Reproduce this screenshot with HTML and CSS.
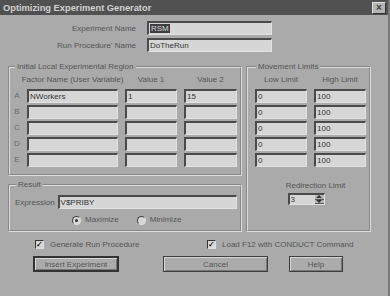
FILE: index.html
```html
<!DOCTYPE html>
<html lang="en">
<head>
    <meta charset="UTF-8">
    <title>Optimizing Experiment Generator</title>
    <link rel="stylesheet" href="styles.css">
</head>
<body>
    <div class="dialog">
        <div class="titlebar">
            <span class="title">Optimizing Experiment Generator</span>
            <span class="close">&times;</span>
        </div>

        <div class="names">
            <div class="name-row">
                <label>Experiment Name</label>
                <div class="field wide"><span class="selected">RSM</span></div>
            </div>
            <div class="name-row">
                <label>Run Procedure' Name</label>
                <div class="field wide">DoTheRun</div>
            </div>
        </div>

        <div class="middle">
            <div class="left-col">
                <fieldset class="group region">
                    <legend>Initial Local Experimental Region</legend>
                    <div class="region-grid">
                        <span></span>
                        <span class="head">Factor Name (User Variable)</span>
                        <span class="head">Value 1</span>
                        <span class="head">Value 2</span>

                        <span class="letter">A</span>
                        <div class="field">NWorkers</div>
                        <div class="field">1</div>
                        <div class="field">15</div>

                        <span class="letter">B</span>
                        <div class="field"></div>
                        <div class="field"></div>
                        <div class="field"></div>

                        <span class="letter">C</span>
                        <div class="field"></div>
                        <div class="field"></div>
                        <div class="field"></div>

                        <span class="letter">D</span>
                        <div class="field"></div>
                        <div class="field"></div>
                        <div class="field"></div>

                        <span class="letter">E</span>
                        <div class="field"></div>
                        <div class="field"></div>
                        <div class="field"></div>
                    </div>
                </fieldset>

                <fieldset class="group result">
                    <legend>Result</legend>
                    <div class="expr-row">
                        <label>Expression</label>
                        <div class="field expr">V$PRIBY</div>
                    </div>
                    <div class="radio-row">
                        <span class="option"><span class="radio on"></span>Maximize</span>
                        <span class="option"><span class="radio"></span>Minimize</span>
                    </div>
                </fieldset>
            </div>

            <fieldset class="group limits">
                <legend>Movement Limits</legend>
                <div class="limits-grid">
                    <span class="head">Low Limit</span>
                    <span class="head">High Limit</span>
                    <div class="field">0</div>
                    <div class="field">100</div>
                    <div class="field">0</div>
                    <div class="field">100</div>
                    <div class="field">0</div>
                    <div class="field">100</div>
                    <div class="field">0</div>
                    <div class="field">100</div>
                    <div class="field">0</div>
                    <div class="field">100</div>
                </div>
                <div class="redirection">
                    <span class="head">Redirection Limit</span>
                    <div class="spinner">
                        <span class="spin-value">3</span>
                        <span class="spin-buttons">
                            <span class="arrow up"></span>
                            <span class="arrow down"></span>
                        </span>
                    </div>
                </div>
            </fieldset>
        </div>

        <div class="checks">
            <span class="check-item first"><span class="checkbox">&#10003;</span>Generate Run Procedure</span>
            <span class="check-item"><span class="checkbox">&#10003;</span>Load F12 with CONDUCT Command</span>
        </div>

        <div class="buttons">
            <button class="btn insert">Insert Experiment</button>
            <button class="btn cancel">Cancel</button>
            <button class="btn help">Help</button>
        </div>
    </div>
</body>
</html>
```

FILE: styles.css
```css
body {
    margin: 0;
    font-family: "Liberation Sans", Arial, sans-serif;
    font-size: 8px;
    color: #555;
    background-color: #a8a8a8;
}
.dialog {
    width: 390px;
    height: 296px;
    box-sizing: border-box;
    background-color: #aaaaaa;
    border-right: 2px solid #7a7a7a;
    overflow: hidden;
}
.titlebar {
    height: 15px;
    background-color: #515151;
    display: flex;
    align-items: center;
    justify-content: space-between;
    padding: 0 2px 0 3px;
}
.title {
    color: #d2d2d2;
    font-weight: bold;
    font-size: 9.3px;
}
.close {
    width: 12px;
    height: 10px;
    background-color: #b4b4b4;
    border-top: 1px solid #e0e0e0;
    border-left: 1px solid #e0e0e0;
    border-bottom: 1px solid #333;
    border-right: 1px solid #333;
    color: #444;
    font-size: 10px;
    line-height: 10px;
    text-align: center;
    font-weight: bold;
}
.field {
    height: 14px;
    box-sizing: border-box;
    background-color: #d6d6d6;
    border-top: 2px solid #4a4a4a;
    border-left: 2px solid #4a4a4a;
    border-bottom: 1px solid #e2e2e2;
    border-right: 1px solid #e2e2e2;
    padding-left: 1px;
    line-height: 11px;
    color: #333;
    white-space: nowrap;
    overflow: hidden;
}
.selected {
    background-color: #3e3e3e;
    color: #dcdcdc;
    padding: 0 1px;
}
.names {
    padding-top: 6px;
    display: flex;
    flex-direction: column;
    gap: 3px;
}
.name-row {
    display: flex;
    align-items: center;
}
.name-row label {
    width: 136px;
    text-align: right;
    margin-right: 11px;
}
.field.wide {
    width: 125px;
}
.middle {
    display: flex;
    gap: 4px;
    margin-top: 10px;
    padding-left: 8px;
}
.left-col {
    width: 234px;
    display: flex;
    flex-direction: column;
    gap: 4px;
}
.group {
    margin: 0;
    border: 2px groove #dcdcdc;
    min-width: 0;
}
.group legend {
    padding: 0 2px;
    margin-left: 1px;
    line-height: 10px;
}
.region {
    padding: 3px 4px 7px 4px;
}
.region-grid {
    display: grid;
    grid-template-columns: 6px 91px 52px 53px;
    grid-template-rows: 12px repeat(5, 14px);
    column-gap: 7px;
    row-gap: 2px;
}
.region-grid .head {
    justify-self: center;
}
.head {
    text-align: center;
    line-height: 10px;
    white-space: nowrap;
}
.letter {
    text-align: center;
    line-height: 14px;
    color: #6a6a6a;
}
.result {
    padding: 5px 3px 5px 5px;
    flex: 1;
}
.expr-row {
    display: flex;
    align-items: center;
}
.expr-row label {
    margin-right: 3px;
}
.field.expr {
    flex: 1;
}
.radio-row {
    display: flex;
    gap: 18px;
    padding-left: 57px;
    margin-top: 6px;
    line-height: 10px;
}
.option {
    display: flex;
    align-items: center;
    gap: 4px;
}
.radio {
    width: 7px;
    height: 7px;
    border-radius: 50%;
    background-color: #d8d8d8;
    border-top: 1px solid #444;
    border-left: 1px solid #444;
    border-bottom: 1px solid #ddd;
    border-right: 1px solid #ddd;
    position: relative;
}
.radio.on::after {
    content: "";
    position: absolute;
    left: 2px;
    top: 2px;
    width: 3px;
    height: 3px;
    border-radius: 50%;
    background-color: #333;
}
.limits {
    width: 125px;
    box-sizing: border-box;
    padding: 3px 3px 5px 7px;
    display: flex;
    flex-direction: column;
}
.limits-grid {
    display: grid;
    grid-template-columns: 52px 52px;
    grid-template-rows: 12px repeat(5, 14px);
    column-gap: 7px;
    row-gap: 2px;
}
.redirection {
    display: flex;
    flex-direction: column;
    align-items: center;
    margin-top: 14px;
    gap: 2px;
}
.redirection .head {
    margin-left: 10px;
}
.spinner {
    width: 37px;
    height: 12px;
    box-sizing: border-box;
    display: flex;
    background-color: #d6d6d6;
    border-top: 2px solid #4a4a4a;
    border-left: 2px solid #4a4a4a;
    border-bottom: 1px solid #e2e2e2;
    border-right: 1px solid #e2e2e2;
    margin-right: 9px;
}
.spin-value {
    flex: 1;
    line-height: 9px;
    padding-left: 1px;
    color: #333;
}
.spin-buttons {
    width: 9px;
    display: flex;
    flex-direction: column;
    background-color: #b8b8b8;
}
.arrow {
    flex: 1;
    display: flex;
    align-items: center;
    justify-content: center;
    border-bottom: 1px solid #555;
}
.arrow.up::before {
    content: "";
    border-left: 3px solid transparent;
    border-right: 3px solid transparent;
    border-bottom: 3px solid #333;
}
.arrow.down::before {
    content: "";
    border-left: 3px solid transparent;
    border-right: 3px solid transparent;
    border-top: 3px solid #333;
}
.checks {
    display: flex;
    align-items: center;
    margin-top: 7px;
    padding-left: 35px;
    height: 10px;
}
.check-item {
    display: flex;
    align-items: center;
    gap: 6px;
}
.check-item.first {
    width: 172px;
}
.checkbox {
    width: 7px;
    height: 7px;
    box-sizing: content-box;
    background-color: #d8d8d8;
    border-top: 1px solid #333;
    border-left: 1px solid #333;
    border-bottom: 1px solid #ddd;
    border-right: 1px solid #ddd;
    font-size: 8px;
    line-height: 7px;
    text-align: center;
    color: #222;
    font-weight: bold;
}
.buttons {
    display: flex;
    margin-top: 7px;
    padding-left: 33px;
}
.btn {
    height: 16px;
    font-family: inherit;
    font-size: 8px;
    color: #555;
    background-color: #ababab;
    border: 1px solid #3e3e3e;
    box-shadow: inset 1px 1px #d6d6d6, inset -1px -1px #777;
    padding: 0;
    cursor: pointer;
}
.insert {
    width: 86px;
    border: 2px solid #333;
}
.cancel {
    width: 105px;
    margin-left: 44px;
}
.help {
    width: 54px;
    margin-left: 21px;
}
```
